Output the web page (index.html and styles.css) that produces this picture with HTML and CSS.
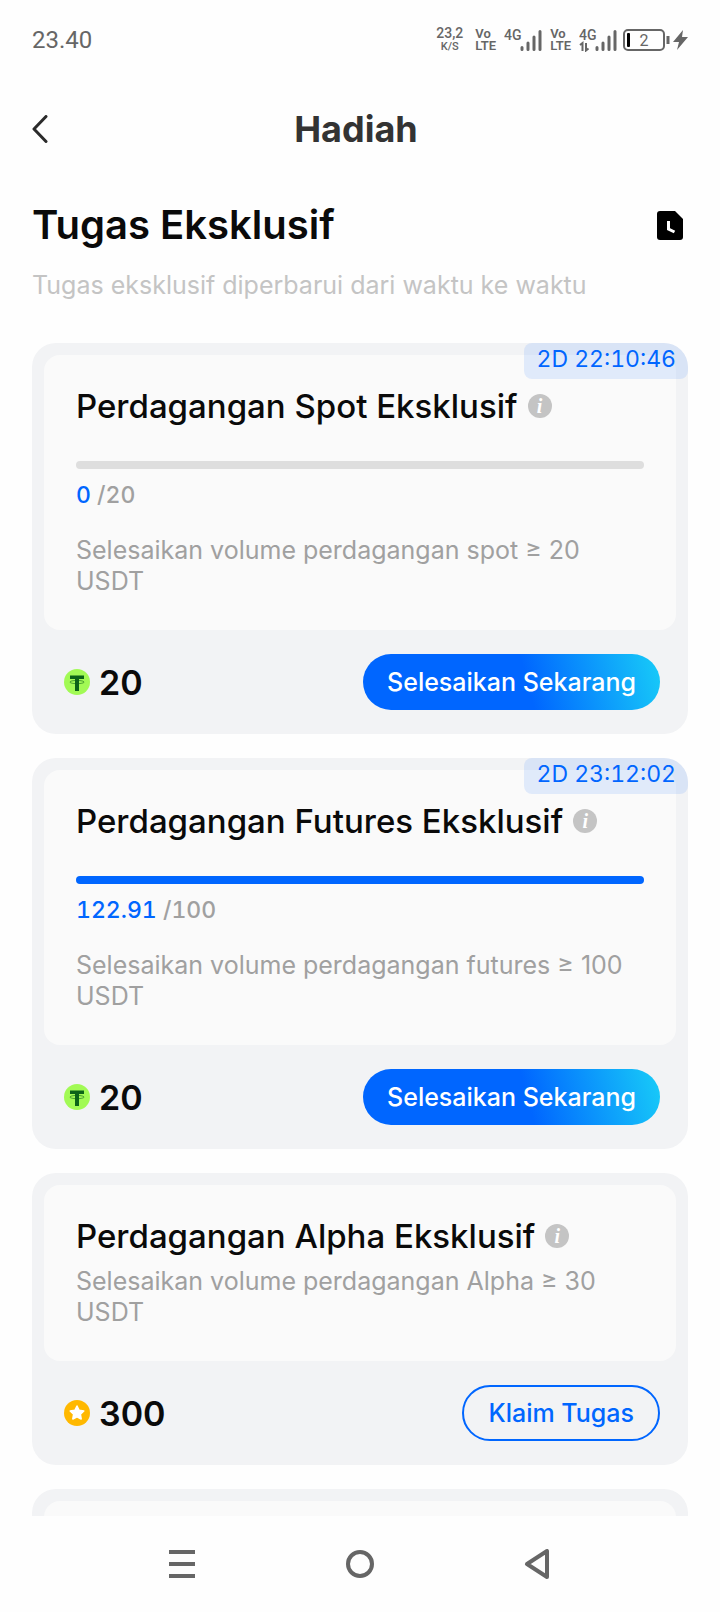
FILE: index.html
```html
<!DOCTYPE html>
<html lang="id">
<head>
    <meta charset="UTF-8">
    <meta name="viewport" content="width=device-width, initial-scale=1.0">
    <title>Hadiah</title>
    <link rel="stylesheet" href="styles.css">
</head>
<body>
    <div class="status-bar">
        <span class="clock">23.40</span>
        <div class="status-icons">
            <div class="stack speed"><span>23,2</span><small>K/S</small></div>
            <div class="stack volte"><span>Vo</span><span>LTE</span></div>
            <svg class="signal" width="38" height="24" viewBox="0 0 38 24">
                <text x="0" y="12">4G</text>
                <path d="M18 19.500v2M24 15v6.500M30 9v12.500M36 3.500v18" />
            </svg>
            <div class="stack volte"><span>Vo</span><span>LTE</span></div>
            <svg class="signal" width="38" height="24" viewBox="0 0 38 24">
                <text x="0" y="12">4G</text>
                <path d="M18 19.500v2M24 15v6.500M30 9v12.500M36 3.500v18" />
                <path class="arrows" d="M1 17l2.500-2v8M7 15v7.500l2.500-2" />
            </svg>
            <svg class="battery" width="48" height="24" viewBox="0 0 48 24">
                <rect x="1" y="2" width="40" height="20" rx="4" fill="none" stroke="#666" stroke-width="2" />
                <rect x="4" y="5" width="3" height="14" rx="1" fill="#000" />
                <path d="M45 8v8" stroke="#666" stroke-width="3" />
                <text x="21" y="18" text-anchor="middle">2</text>
            </svg>
            <svg width="15" height="22" viewBox="0 0 15 22">
                <path d="M10 1L0 13h6L4 21l11-13H9z" fill="#666" />
            </svg>
        </div>
    </div>

    <header class="header">
        <button class="back" aria-label="Kembali">
            <svg width="16" height="28" viewBox="0 0 16 28">
                <path d="M14 1.500L2 14l12 12.500" fill="none" stroke="#2b2b2b" stroke-width="3" stroke-linecap="round" stroke-linejoin="round" />
            </svg>
        </button>
        <h1>Hadiah</h1>
    </header>

    <main class="content">
        <div class="section-title">
            <h2>Tugas Eksklusif</h2>
            <button class="history" aria-label="Riwayat">
                <svg width="26" height="30" viewBox="0 0 26 30">
                    <path d="M3 1h15l8 8v18a3 3 0 0 1-3 3H3a3 3 0 0 1-3-3V4a3 3 0 0 1 3-3z" />
                    <path d="M11.500 11v8l6 3" fill="none" stroke="#fff" stroke-width="3" />
                </svg>
            </button>
        </div>
        <p class="subtitle">Tugas eksklusif diperbarui dari waktu ke waktu</p>

        <section class="card">
            <span class="timer">2D 22:10:46</span>
            <div class="card-body">
                <div class="card-title">
                    <h3>Perdagangan Spot Eksklusif</h3>
                    <button class="info" aria-label="Info">i</button>
                </div>
                <progress class="bar" value="0" max="20" aria-label="Kemajuan"></progress>
                <p class="count"><b>0</b> /20</p>
                <p class="desc">Selesaikan volume perdagangan spot ≥ 20 USDT</p>
            </div>
            <div class="card-footer">
                <svg width="26" height="26" viewBox="0 0 26 26">
                    <circle cx="13" cy="13" r="13" fill="#a2fa55" />
                    <path d="M6 6.500h14V10h-5v12h-4V10H6z" fill="#0b6318" />
                    <path d="M11 11.500c-7 .5-7 3 2 3.200 9-.2 9-2.700 2-3.200" fill="none" stroke="#0b6318" stroke-width=".6" />
                </svg>
                <span class="amount">20</span>
                <button class="btn btn-fill">Selesaikan Sekarang</button>
            </div>
        </section>

        <section class="card">
            <span class="timer">2D 23:12:02</span>
            <div class="card-body">
                <div class="card-title">
                    <h3>Perdagangan Futures Eksklusif</h3>
                    <button class="info" aria-label="Info">i</button>
                </div>
                <progress class="bar" value="100" max="100" aria-label="Kemajuan"></progress>
                <p class="count"><b>122.91</b> /100</p>
                <p class="desc">Selesaikan volume perdagangan futures ≥ 100 USDT</p>
            </div>
            <div class="card-footer">
                <svg width="26" height="26" viewBox="0 0 26 26">
                    <circle cx="13" cy="13" r="13" fill="#a2fa55" />
                    <path d="M6 6.500h14V10h-5v12h-4V10H6z" fill="#0b6318" />
                    <path d="M11 11.500c-7 .5-7 3 2 3.200 9-.2 9-2.700 2-3.200" fill="none" stroke="#0b6318" stroke-width=".6" />
                </svg>
                <span class="amount">20</span>
                <button class="btn btn-fill">Selesaikan Sekarang</button>
            </div>
        </section>

        <section class="card">
            <div class="card-body">
                <div class="card-title">
                    <h3>Perdagangan Alpha Eksklusif</h3>
                    <button class="info" aria-label="Info">i</button>
                </div>
                <p class="desc desc-near">Selesaikan volume perdagangan Alpha ≥ 30 USDT</p>
            </div>
            <div class="card-footer">
                <svg width="26" height="26" viewBox="0 0 26 26">
                    <circle cx="13" cy="13" r="13" fill="#ffb800" />
                    <path d="M13 6l2.100 4.300 4.700.7-3.400 3.300.8 4.700-4.200-2.200-4.200 2.200.8-4.700L6.200 11l4.700-.7z" fill="#fff" stroke="#fff" stroke-width="1.500" stroke-linejoin="round" />
                </svg>
                <span class="amount">300</span>
                <button class="btn btn-line">Klaim Tugas</button>
            </div>
        </section>

        <section class="card">
            <div class="card-body"></div>
        </section>
    </main>

    <nav class="nav-bar">
        <button aria-label="Menu">
            <svg width="30" height="30" viewBox="0 0 30 30">
                <path d="M2 3h26M2 15h26M2 27h26" />
            </svg>
        </button>
        <button aria-label="Beranda">
            <svg width="30" height="30" viewBox="0 0 30 30">
                <circle cx="15" cy="15" r="12" />
            </svg>
        </button>
        <button aria-label="Kembali">
            <svg width="30" height="30" viewBox="0 0 30 30">
                <path d="M24 2v26L4 15z" stroke-linejoin="round" />
            </svg>
        </button>
    </nav>
</body>
</html>
```

FILE: styles.css
```css
* {
    box-sizing: border-box;
}

body {
    display: flex;
    flex-direction: column;
    height: 100vh;
    margin: 0;
    background-color: #fefefe;
    color: #0a0a0a;
    font-family: Inter, "Liberation Sans", sans-serif;
}

h1, h2, h3, p {
    margin: 0;
}

button {
    padding: 0;
    border: none;
    background: none;
    font-family: inherit;
    cursor: pointer;
}

svg {
    display: block;
    flex-shrink: 0;
}

.status-bar {
    display: flex;
    flex-shrink: 0;
    justify-content: space-between;
    align-items: center;
    height: 80px;
    padding: 0 32px;
    color: #666;
    font-family: Roboto, sans-serif;
}

.clock {
    font-size: 24px;
}

.status-icons {
    display: flex;
    align-items: center;
}

.stack {
    display: flex;
    flex-direction: column;
    font-size: 13px;
    font-weight: 600;
    line-height: 12px;
}

.speed {
    align-items: center;
    margin-right: 12px;
    font-size: 14px;
    font-weight: 500;
    line-height: 13px;
}

.speed small {
    font-size: 11px;
}

.volte {
    margin-right: 8px;
}

.signal {
    margin-right: 8px;
}

.signal text {
    fill: #666;
    font-size: 14px;
    font-weight: 500;
}

.signal path {
    fill: none;
    stroke: #666;
    stroke-width: 3;
    stroke-linecap: round;
}

.signal .arrows {
    stroke-width: 2;
    stroke-linecap: butt;
}

.battery {
    margin-left: -2px;
    margin-right: 2px;
}

.battery text {
    fill: #666;
    font-size: 16px;
}

.header {
    display: grid;
    grid-template-columns: 40px 1fr 48px;
    flex-shrink: 0;
    align-items: center;
    height: 98px;
    padding: 0 32px;
}

.header h1 {
    color: #333;
    font-size: 36px;
    font-weight: 700;
    line-height: 44px;
    text-align: center;
}

.content {
    flex: 1;
    min-height: 0;
    padding: 19px 32px 0;
    overflow: hidden;
}

.section-title {
    display: flex;
    justify-content: space-between;
    align-items: center;
    padding-right: 5px;
}

.section-title h2 {
    font-size: 40px;
    font-weight: 600;
    line-height: 56px;
}

.subtitle {
    margin: 17px 0 42px;
    color: #c4c4c4;
    font-size: 25px;
    line-height: 31px;
}

.card {
    position: relative;
    margin-bottom: 24px;
    padding: 12px 12px 0;
    border-radius: 24px;
    background-color: #f2f3f5;
    overflow: hidden;
}

.timer {
    position: absolute;
    top: 0;
    right: 0;
    height: 36px;
    padding: 0 12px;
    border-radius: 8px;
    background-color: rgba(0, 102, 255, 0.1);
    color: #0066ff;
    font-size: 23px;
    font-variant-numeric: tabular-nums;
    line-height: 33px;
}

.card-body {
    min-height: 60px;
    padding: 29px 32px 33px;
    border-radius: 16px;
    background-color: #fafafa;
}

.card-title {
    display: flex;
    align-items: center;
    gap: 10px;
}

.card-title h3 {
    font-size: 33px;
    font-weight: 500;
    line-height: 44px;
}

.info {
    width: 24px;
    height: 24px;
    border-radius: 50%;
    background-color: #c4c4c4;
    color: #fff;
    font-family: "Liberation Serif", serif;
    font-size: 20px;
    font-style: italic;
    font-weight: 700;
    line-height: 24px;
}

.bar {
    display: block;
    width: 100%;
    height: 8px;
    margin: 33px 0 11px;
    border: none;
    border-radius: 4px;
    background-color: #dedede;
    appearance: none;
    overflow: hidden;
}

.bar::-webkit-progress-bar {
    background-color: #dedede;
}

.bar::-webkit-progress-value {
    background-color: #0066ff;
}

.count {
    color: #a0a0a0;
    font-size: 23px;
    font-variant-numeric: tabular-nums;
    font-weight: 500;
    line-height: 31px;
}

.count b {
    color: #0066ff;
    font-weight: 500;
}

.desc {
    margin-top: 24px;
    color: #a0a0a0;
    font-size: 25px;
    line-height: 31px;
}

.desc-near {
    margin-top: 8px;
}

.card-footer {
    display: flex;
    align-items: center;
    height: 104px;
    padding: 0 16px 0 20px;
}

.amount {
    margin-left: 9px;
    font-size: 34px;
    font-weight: 600;
}

.btn {
    height: 56px;
    margin-left: auto;
    padding: 0 24px;
    border-radius: 28px;
    font-size: 25px;
    font-weight: 500;
}

.btn-fill {
    background: linear-gradient(75deg, #0066ff 55%, #18ccf8 100%);
    color: #fff;
}

.btn-line {
    border: 2px solid #0066ff;
    color: #0066ff;
}

.nav-bar {
    display: flex;
    flex-shrink: 0;
    justify-content: space-around;
    align-items: center;
    height: 96px;
    padding: 0 13%;
}

.nav-bar svg {
    fill: none;
    stroke: #666;
    stroke-width: 4;
}
```
